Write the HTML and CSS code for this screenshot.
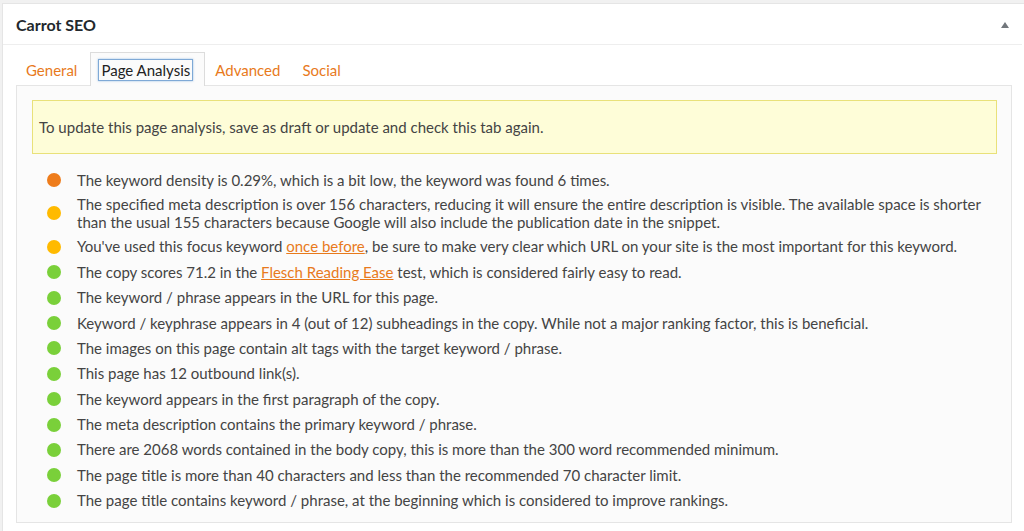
FILE: index.html
```html
<!DOCTYPE html>
<html>
<head>
<meta charset="utf-8">
<link rel="stylesheet" href="styles.css">
</head>
<body>
<div class="postbox">
  <div class="hndle">
    <h2 class="title">Carrot SEO</h2>
    <span class="toggle"></span>
  </div>
  <div class="inside">
    <div class="tabs">
      <span class="tab first">General</span>
      <span class="tab active"><span class="focus">Page Analysis</span></span>
      <span class="tab">Advanced</span>
      <span class="tab">Social</span>
    </div>
    <div class="panel">
      <div class="notice">To update this page analysis, save as draft or update and check this tab again.</div>
      <ul class="results">
        <li><span class="dot ok"></span><span class="txt">The keyword density is 0.29%, which is a bit low, the keyword was found 6 times.</span></li>
        <li class="two"><span class="dot warn"></span><span class="txt">The specified meta description is over 156 characters, reducing it will ensure the entire description is visible. The available space is shorter than the usual 155 characters because Google will also include the publication date in the snippet.</span></li>
        <li><span class="dot warn"></span><span class="txt">You've used this focus keyword <a href="#">once before</a>, be sure to make very clear which URL on your site is the most important for this keyword.</span></li>
        <li><span class="dot good"></span><span class="txt">The copy scores 71.2 in the <a href="#">Flesch Reading Ease</a> test, which is considered fairly easy to read.</span></li>
        <li><span class="dot good"></span><span class="txt">The keyword / phrase appears in the URL for this page.</span></li>
        <li><span class="dot good"></span><span class="txt">Keyword / keyphrase appears in 4 (out of 12) subheadings in the copy. While not a major ranking factor, this is beneficial.</span></li>
        <li><span class="dot good"></span><span class="txt">The images on this page contain alt tags with the target keyword / phrase.</span></li>
        <li><span class="dot good"></span><span class="txt">This page has 12 outbound link(s).</span></li>
        <li><span class="dot good"></span><span class="txt">The keyword appears in the first paragraph of the copy.</span></li>
        <li><span class="dot good"></span><span class="txt">The meta description contains the primary keyword / phrase.</span></li>
        <li><span class="dot good"></span><span class="txt">There are 2068 words contained in the body copy, this is more than the 300 word recommended minimum.</span></li>
        <li><span class="dot good"></span><span class="txt">The page title is more than 40 characters and less than the recommended 70 character limit.</span></li>
        <li><span class="dot good"></span><span class="txt">The page title contains keyword / phrase, at the beginning which is considered to improve rankings.</span></li>
      </ul>
    </div>
  </div>
</div>
</body>
</html>
```
FILE: styles.css
```css
html, body {
  margin: 0;
  padding: 0;
  background: #f1f1f1;
  overflow: hidden;
}
body {
  font-family: Lato, "Open Sans", sans-serif;
  font-size: 15px;
  color: #444;
}
.postbox {
  margin: 3px 0 0 2px;
  width: 1030px;
  background: #fff;
  border: 1px solid #e5e5e5;
  border-right: none;
  height: 540px;
  box-sizing: border-box;
}
.hndle {
  height: 41px;
  border-bottom: 1px solid #eee;
  display: flex;
  align-items: center;
  padding: 0 0 0 13px;
  width: 1019px;
  box-sizing: border-box;
}
.title {
  margin: 0;
  font-size: 16px;
  font-weight: 700;
  color: #23282d;
  padding-top: 1px;
}
.toggle {
  margin-left: auto;
  margin-right: 13px;
  width: 0;
  height: 0;
  border-left: 4.5px solid transparent;
  border-right: 4.5px solid transparent;
  border-bottom: 6px solid #72777c;
  margin-top: 1px;
}
.inside {
  padding: 7px 0 0 13px;
}
.tabs {
  display: flex;
  height: 33px;
  position: relative;
  z-index: 1;
}
.tab {
  display: flex;
  align-items: center;
  padding: 1px 11px 0 9px;
  color: #e87a1c;
  border: 1px solid transparent;
  border-bottom: none;
  height: 33px;
  box-sizing: border-box;
}
.tab.first {
  padding: 1px 12px 0 9px;
}
.tab.active {
  border-color: #dcdcdc;
  background: #fbfbfb;
  height: 34px;
  color: #222;
  padding: 1px 12px 0 8px;
}
.focus {
  outline: 1px solid #7fa9d6;
  box-shadow: 0 0 2px 1px rgba(91, 157, 217, 0.6);
  padding: 1px 2px 1px 2px;
  line-height: 18px;
}
.panel {
  width: 996px;
  box-sizing: border-box;
  border: 1px solid #e5e5e5;
  background: #fbfbfb;
  padding: 14px 14px 11px 15px;
  height: 438px;
}
.notice {
  background: #fefdd8;
  border: 1px solid #e9e17a;
  height: 54px;
  box-sizing: border-box;
  display: flex;
  align-items: center;
  padding: 0 6px 1px;
}
.results {
  list-style: none;
  margin: 13px 0 0;
  padding: 0 0 0 15px;
}
.results li {
  display: flex;
  align-items: flex-start;
  line-height: 18px;
  padding: 3.7px 0;
}
.dot {
  flex: none;
  width: 14px;
  height: 14px;
  border-radius: 50%;
  margin: 2.5px 16px 0 0;
}
.dot.ok { background: #ee7c1b; }
.dot.warn { background: #ffba00; }
.dot.good { background: #7ad03a; }
.results li.two {
  align-items: center;
  padding: 2.7px 0;
}
.results li.two .dot { margin-top: 0; }
.txt { flex: 1; }
.results a {
  color: #e87a1c;
  text-decoration: underline;
}
```
